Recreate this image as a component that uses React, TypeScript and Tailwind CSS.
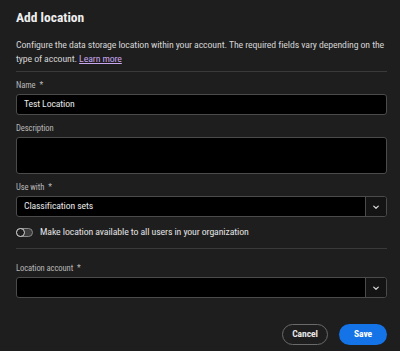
import React from "react";

function Chevron() {
  return (
    <svg width="10" height="10" viewBox="0 0 10 10" fill="none">
      <path d="M2.7 4.1l2.3 2.2 2.3-2.2" stroke="#d0d0d0" strokeWidth="1.3" strokeLinecap="round" strokeLinejoin="round" />
    </svg>
  );
}

function Label({ children, req }: { children: React.ReactNode; req?: boolean }) {
  return (
    <div className="text-[8.6px] leading-[12px] text-[#b8b8b8] mb-[3px]">
      {children}
      {req && <span className="ml-[4px]">*</span>}
    </div>
  );
}

function Select({ value }: { value?: string }) {
  return (
    <div className="flex h-[21px] rounded-[3px] border border-[#4b4b4b] bg-black">
      <div className="flex-1 flex items-center pl-[7px] text-[9.7px] text-[#e8e8e8]">{value}</div>
      <div className="w-[21px] flex items-center justify-center border-l border-[#4b4b4b] bg-[#141414] rounded-r-[3px]">
        <Chevron />
      </div>
    </div>
  );
}

export default function App() {
  return (
    <div
      className="w-[400px] h-[351px] bg-[#1e1e1e] px-[16px] pt-[7px] overflow-hidden tracking-[-0.1px]"
      style={{ fontFamily: '"Roboto Condensed", "Roboto", sans-serif' }}
    >
      <div className="text-[13.5px] font-bold text-[#eeeeee] leading-[20px] tracking-[0px]">Add location</div>
      <p className="mt-[11px] text-[9.8px] leading-[14px] text-[#d4d4d4] w-[371px]">
        Configure the data storage location within your account. The required fields vary depending on the type of account.{" "}
        <span className="text-[#c9a7ee] underline">Learn more</span>
      </p>
      <div className="mt-[5px] h-px bg-[#3a3a3a] w-[371px]" />
      <div className="mt-[7px] w-[371px]">
        <Label req>Name</Label>
        <div className="h-[21px] rounded-[3px] border border-[#4b4b4b] bg-black flex items-center pl-[7px] text-[9.7px] text-[#e8e8e8]">
          Test Location
        </div>
      </div>
      <div className="mt-[7px] w-[371px]">
        <Label>Description</Label>
        <div className="h-[37px] rounded-[3px] border border-[#4b4b4b] bg-black" />
      </div>
      <div className="mt-[7px] w-[371px]">
        <Label req>Use with</Label>
        <Select value="Classification sets" />
      </div>
      <div className="mt-[8px] flex items-center h-[14px]">
        <div className="w-[17px] h-[9px] rounded-full bg-[#3c3c3c] border border-[#8a8a8a] relative">
          <div className="absolute left-[-1px] top-[-1px] w-[9px] h-[9px] rounded-full border-[1.5px] border-[#d8d8d8] bg-[#1e1e1e]" />
        </div>
        <span className="ml-[7px] text-[9.8px] text-[#e2e2e2] leading-[14px]">Make location available to all users in your organization</span>
      </div>
      <div className="mt-[9px] h-px bg-[#3a3a3a] w-[371px]" />
      <div className="mt-[13px] w-[371px]">
        <Label req>Location account</Label>
        <Select />
      </div>
      <div className="mt-[26px] w-[371px] flex justify-end gap-[11px]">
        <button className="h-[21px] w-[46px] rounded-full border border-[#6a6a6a] text-[9.6px] font-bold text-[#e8e8e8] flex items-center justify-center">
          Cancel
        </button>
        <button className="h-[21px] w-[48px] rounded-full bg-[#1473e6] text-[9.6px] font-bold text-white flex items-center justify-center">
          Save
        </button>
      </div>
    </div>
  );
}
